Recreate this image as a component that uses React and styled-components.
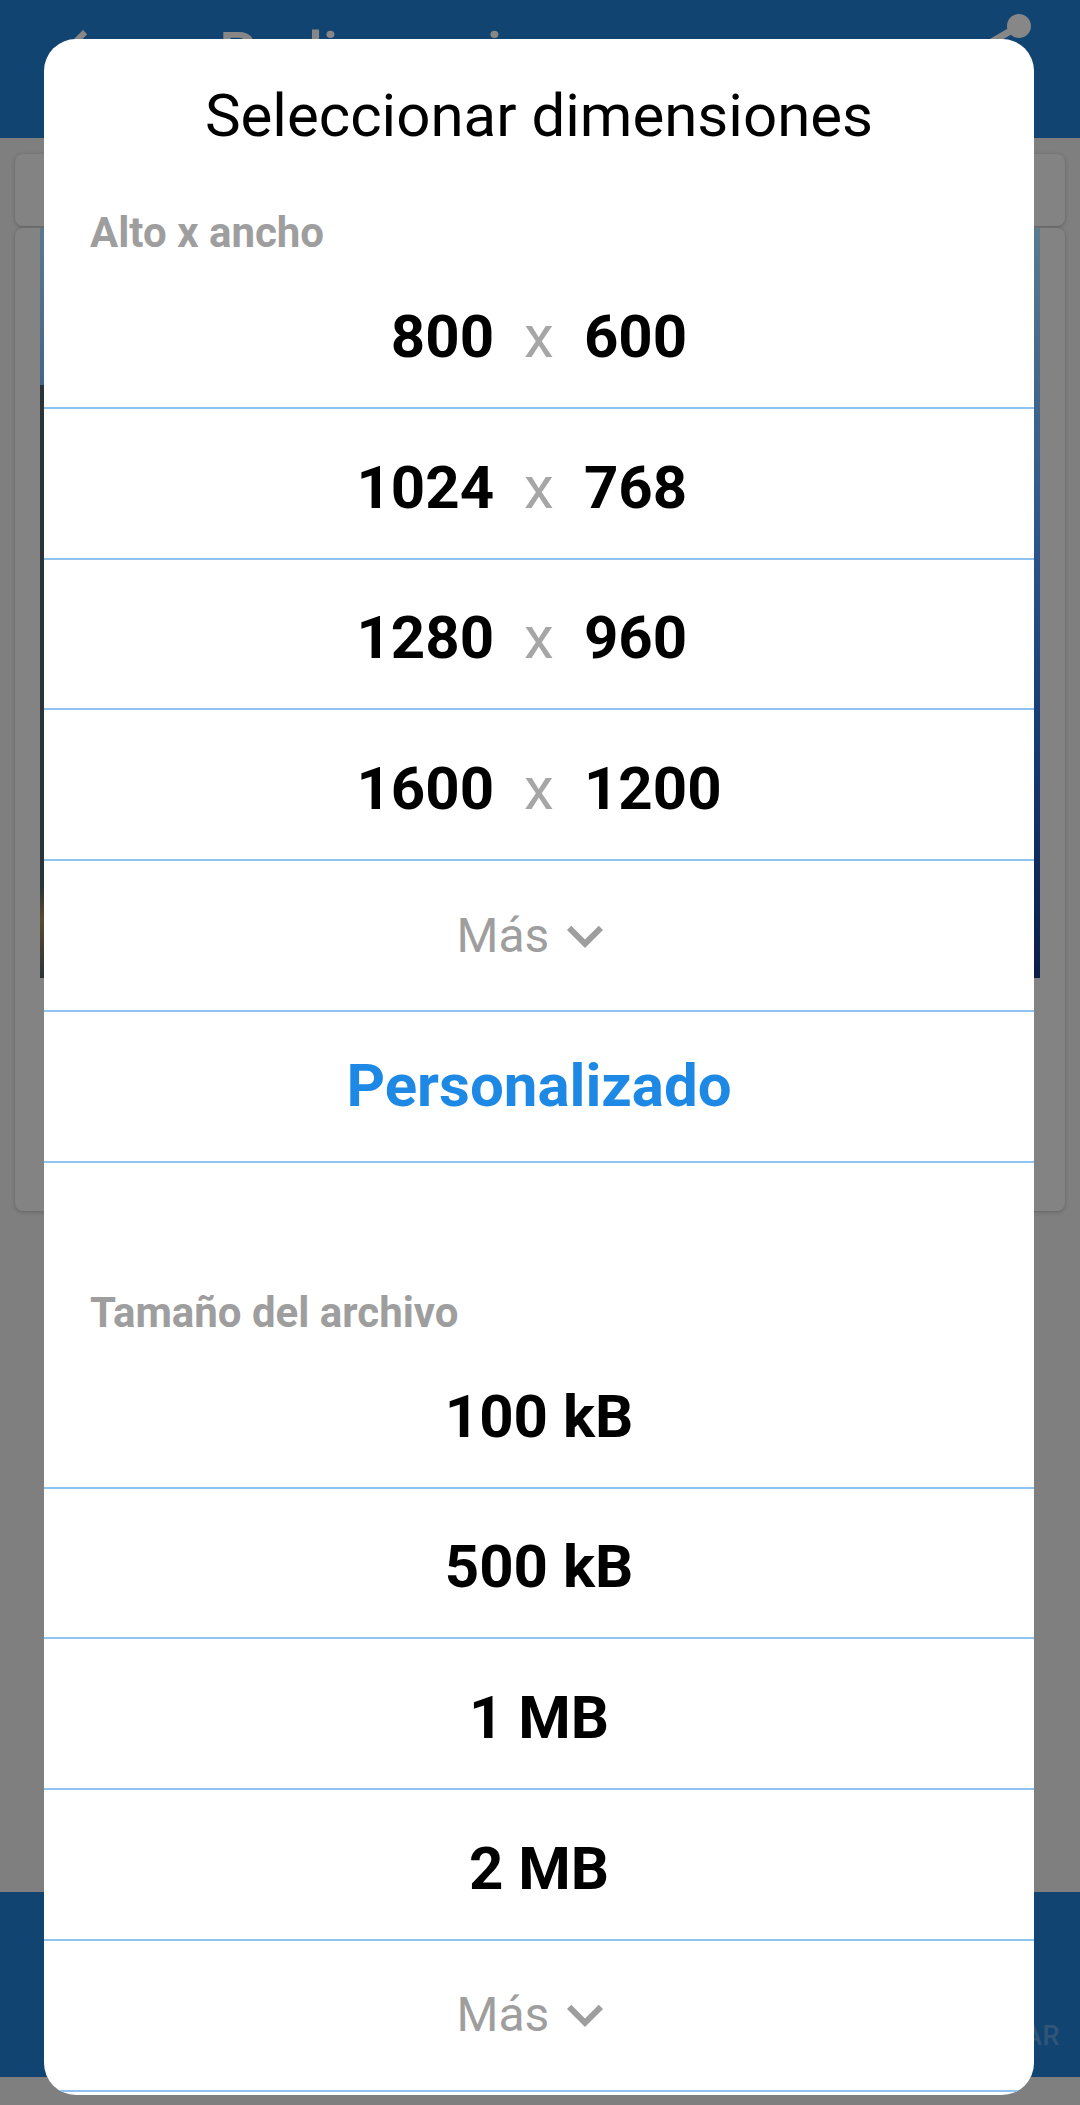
import React from "react"
import styled, { createGlobalStyle, css } from "styled-components"

const GlobalStyle = createGlobalStyle`
	html, body {
		margin: 0;
		padding: 0;
		background: #7f7f7f;
	}
	body {
		font-family: Roboto, "Noto Sans", sans-serif;
	}
`

const Screen = styled.div`
	position: relative;
	width: 1080px;
	height: 2105px;
	overflow: hidden;
	display: flex;
	flex-direction: column;
	background: #7f7f7f;
`

const AppBar = styled.header`
	height: 138px;
	flex-shrink: 0;
	background: #114470;
	display: flex;
	align-items: flex-start;
	padding: 18px 37px 0 47px;
	box-sizing: border-box;
	color: #878787;
`

const BarTitle = styled.div`
	margin-left: 100px;
	font-size: 60px;
	line-height: 72px;
	font-weight: 500;
`

const ShareIcon = styled.svg`
	margin-left: auto;
	margin-top: -12px;
`

const Body = styled.main`
	flex: 1;
	padding: 16px 15px 0;
	display: flex;
	flex-direction: column;
	gap: 2px;
`

const Card = styled.div`
	background: #838383;
	border-radius: 8px;
	box-shadow: 0 1px 4px rgba(0, 0, 0, 0.22);
	height: ${p => p.h}px;
	padding: 0 25px;
`

const Photo = styled.div`
	height: 750px;
	background:
		linear-gradient(180deg, transparent 0 21%, #2c3338 21% 88%, #5a4a30 92%, #2c3338 100%) left top / 18px 100% no-repeat,
		linear-gradient(180deg, #5a7a90 0%, #46698a 18%, #2b548a 42%, #163a72 68%, #0a1d48 100%);
`

const BottomBar = styled.footer`
	height: 185px;
	margin-bottom: 28px;
	flex-shrink: 0;
	background: #114470;
	display: flex;
	align-items: flex-end;
	justify-content: flex-end;
	padding: 0 20px 25px;
	box-sizing: border-box;
`

const BarButton = styled.span`
	font-size: 27px;
	line-height: 32px;
	font-weight: 500;
	color: #2f5578;
	letter-spacing: 0.5px;
`

/* dialog */

const Dialog = styled.div`
	position: absolute;
	left: 44px;
	top: 39px;
	width: 990px;
	height: 2056px;
	background: #fff;
	border-radius: 32px;
	overflow: hidden;
	padding-top: 42px;
	box-sizing: border-box;
`

const DialogTitle = styled.h1`
	margin: 0;
	text-align: center;
	font-size: 60px;
	line-height: 70px;
	font-weight: 400;
	color: #000;
`

const SectionLabel = styled.div`
	margin-top: ${p => p.gap}px;
	padding-left: 46px;
	font-size: 42px;
	line-height: 50px;
	font-weight: 700;
	color: #9e9e9e;
`

const Row = styled.div`
	height: 150.8px;
	box-sizing: border-box;
	border-bottom: 2px solid #8fc3f0;
	display: flex;
	align-items: center;
	justify-content: center;
	font-size: 60px;
	line-height: 70px;
	font-weight: 700;
	color: #000;

	${p => p.value && css`
		padding-top: 9px;
	`}
	${p => p.accent && css`
		color: #1e88e5;
	`}
`

const Pair = styled.div`
	width: 100%;
	display: grid;
	grid-template-columns: 1fr auto 1fr;
	column-gap: 30px;

	> span:first-child {
		text-align: right;
	}
`

const Times = styled.span`
	font-weight: 400;
	color: #a6a6a6;
`

const More = styled.span`
	display: flex;
	align-items: center;
	font-size: 48px;
	line-height: 56px;
	font-weight: 400;
	color: #9e9e9e;
`

const sizes = [
	["800", "600"],
	["1024", "768"],
	["1280", "960"],
	["1600", "1200"],
]

const fileSizes = ["100 kB", "500 kB", "1 MB", "2 MB"]

function ExpandMore () {
	return <svg width="72" height="72" viewBox="0 0 24 24" fill="#9e9e9e">
		<path d="M16.59 8.59L12 13.17 7.41 8.59 6 10l6 6 6-6z" />
	</svg>
}

function MoreRow () {
	return <Row>
		<More>Más<ExpandMore /></More>
	</Row>
}

export default function App () {
	return <>
		<GlobalStyle />
		<Screen>
			<AppBar>
				<svg width="72" height="72" viewBox="0 0 24 24" fill="#878787">
					<path d="M20 11H7.83l5.59-5.59L12 4l-8 8 8 8 1.41-1.41L7.83 13H20v-2z" />
				</svg>
				<BarTitle>Redimensionar</BarTitle>
				<ShareIcon width="96" height="96" viewBox="0 0 24 24" fill="#878787">
					<path d="M18 16.08c-.76 0-1.44.3-1.96.77L8.91 12.7c.05-.23.09-.46.09-.7s-.04-.47-.09-.7l7.05-4.11c.54.5 1.25.81 2.04.81 1.66 0 3-1.34 3-3s-1.34-3-3-3-3 1.34-3 3c0 .24.04.47.09.7L8.04 9.81C7.5 9.31 6.79 9 6 9c-1.66 0-3 1.34-3 3s1.34 3 3 3c.79 0 1.5-.31 2.04-.81l7.12 4.16c-.05.21-.08.43-.08.65 0 1.61 1.31 2.92 2.92 2.92 1.61 0 2.92-1.31 2.92-2.92s-1.31-2.92-2.92-2.92z" />
				</ShareIcon>
			</AppBar>

			<Body>
				<Card h={72} />
				<Card h={983}>
					<Photo />
				</Card>
			</Body>

			<BottomBar>
				<BarButton>REDIMENSIONAR</BarButton>
			</BottomBar>

			<Dialog>
				<DialogTitle>Seleccionar dimensiones</DialogTitle>

				<SectionLabel gap={57}>Alto x ancho</SectionLabel>
				{sizes.map(([h, w]) => (
					<Row value key={h}>
						<Pair>
							<span>{h}</span>
							<Times>x</Times>
							<span>{w}</span>
						</Pair>
					</Row>
				))}
				<MoreRow />
				<Row accent>Personalizado</Row>

				<SectionLabel gap={125}>Tamaño del archivo</SectionLabel>
				{fileSizes.map(s => <Row value key={s}>{s}</Row>)}
				<MoreRow />
			</Dialog>
		</Screen>
	</>
}
